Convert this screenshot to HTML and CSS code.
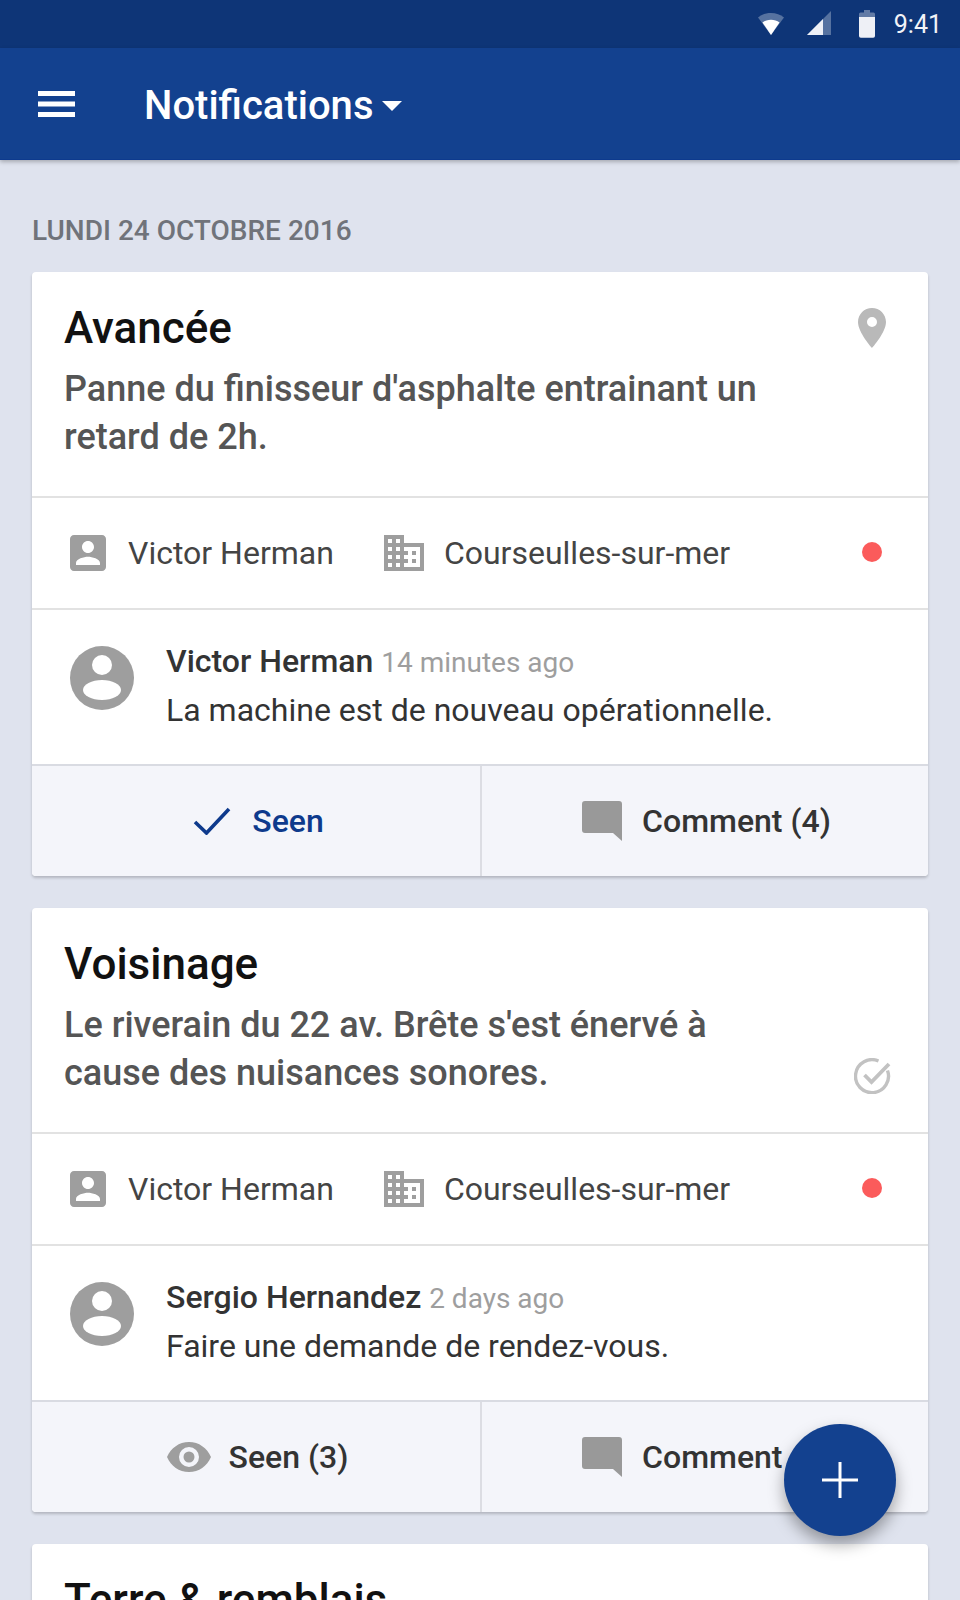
FILE: index.html
```html
<!DOCTYPE html>
<html lang="en">
<head>
<meta charset="UTF-8">
<meta name="viewport" content="width=device-width, initial-scale=1.0">
<title>Notifications</title>
<link rel="stylesheet" href="styles.css">
</head>
<body>
<div class="statusbar">
  <svg class="st-wifi" width="26" height="26" viewBox="0 0 26 26"><path d="M0 6.500C3.500 3.500 8 2 13 2s9.500 1.500 13 4.500L13 24z" fill="#fff" opacity=".3"/><path d="M4.500 11.500C6.800 9.700 9.800 8.700 13 8.700s6.200 1 8.500 2.800L13 24z" fill="#fff"/></svg>
  <svg class="st-signal" width="24" height="26" viewBox="0 0 24 26"><path d="M0 24 24 0v24z" fill="#fff" opacity=".3"/><path d="M0 24 16 8v16z" fill="#eef0f6"/></svg>
  <svg class="st-battery" width="16" height="28" viewBox="0 0 16 28"><path d="M5 0h6v2.500h3.500q1.500 0 1.500 1.500v6H0V4q0-1.500 1.500-1.500H5z" fill="#fff" opacity=".35"/><path d="M0 7h16v19q0 1.800-1.800 1.800H1.800Q0 27.800 0 26z" fill="#eef0f6"/></svg>
  <span class="st-time">9:41</span>
</div>
<header class="appbar">
  <svg class="menu" width="37" height="26" viewBox="0 0 37 26"><path d="M0 0h37v5H0zM0 10.500h37v5H0zM0 21h37v5H0z" fill="#fff"/></svg>
  <h1>Notifications</h1>
  <span class="caret"></span>
</header>

<main class="content">
  <div class="date">LUNDI 24 OCTOBRE 2016</div>

  <section class="card">
    <div class="head">
      <div class="head-text">
        <h2>Avancée</h2>
        <p>Panne du finisseur d'asphalte entrainant un retard de 2h.</p>
      </div>
      <svg class="pin" width="28" height="40" viewBox="0 0 28 40"><path fill-rule="evenodd" d="M14 0C6.300 0 0 6.200 0 14c0 10.500 14 26 14 26s14-15.500 14-26C28 6.200 21.700 0 14 0zm0 19a5 5 0 1 1 0-10 5 5 0 0 1 0 10z" fill="#b9b9b9"/></svg>
    </div>
    <div class="meta">
      <svg class="ic-contact" width="36" height="36" viewBox="3 3 18 18"><use href="#contact"/></svg>
      <span class="meta-name">Victor Herman</span>
      <svg class="ic-building" width="40" height="36" viewBox="2 3 20 18"><use href="#building"/></svg>
      <span class="meta-place">Courseulles-sur-mer</span>
      <span class="dot"></span>
    </div>
    <div class="comment">
      <svg class="avatar" width="64" height="64" viewBox="0 0 64 64"><use href="#avatar"/></svg>
      <div class="comment-text">
        <div><strong>Victor Herman</strong> <span class="ago">14 minutes ago</span></div>
        <div class="msg">La machine est de nouveau opérationnelle.</div>
      </div>
    </div>
    <div class="actions">
      <div class="action seen">
        <svg width="38" height="28" viewBox="0 0 38 28"><path d="M2 15l11.500 11L36 2" fill="none" stroke="#0e3a8c" stroke-width="3.600"/></svg>
        <span>Seen</span>
      </div>
      <div class="action">
        <svg width="40" height="40" viewBox="0 0 40 40"><use href="#bubble"/></svg>
        <span>Comment (4)</span>
      </div>
    </div>
  </section>

  <section class="card">
    <div class="head">
      <div class="head-text">
        <h2>Voisinage</h2>
        <p>Le riverain du 22 av. Brête s'est énervé à cause des nuisances sonores.</p>
      </div>
      <svg class="done" width="38" height="36" viewBox="0 0 38 36"><path d="M33.500 12.500A16.500 16.500 0 1 1 24.500 3" fill="none" stroke="#c2c2c2" stroke-width="3.400"/><path d="M10.500 17l7 7L35 6" fill="none" stroke="#c2c2c2" stroke-width="3.800"/></svg>
    </div>
    <div class="meta">
      <svg class="ic-contact" width="36" height="36" viewBox="3 3 18 18"><use href="#contact"/></svg>
      <span class="meta-name">Victor Herman</span>
      <svg class="ic-building" width="40" height="36" viewBox="2 3 20 18"><use href="#building"/></svg>
      <span class="meta-place">Courseulles-sur-mer</span>
      <span class="dot"></span>
    </div>
    <div class="comment">
      <svg class="avatar" width="64" height="64" viewBox="0 0 64 64"><use href="#avatar"/></svg>
      <div class="comment-text">
        <div><strong>Sergio Hernandez</strong> <span class="ago">2 days ago</span></div>
        <div class="msg">Faire une demande de rendez-vous.</div>
      </div>
    </div>
    <div class="actions">
      <div class="action seen-count">
        <svg width="44" height="30" viewBox="0 0 44 30"><path fill-rule="evenodd" d="M22 0C12 0 4 6 0 15c4 9 12 15 22 15s18-6 22-15C40 6 32 0 22 0zm0 25a10 10 0 1 1 0-20 10 10 0 0 1 0 20zm0-4.500a5.500 5.500 0 1 0 0-11 5.500 5.500 0 0 0 0 11z" fill="#9e9e9e"/></svg>
        <span>Seen (3)</span>
      </div>
      <div class="action">
        <svg width="40" height="40" viewBox="0 0 40 40"><use href="#bubble"/></svg>
        <span>Comment (2)</span>
      </div>
    </div>
  </section>

  <section class="card">
    <div class="head">
      <div class="head-text">
        <h2>Terre &amp; remblais</h2>
      </div>
    </div>
  </section>
</main>

<button class="fab"><svg width="36" height="36" viewBox="0 0 36 36"><path d="M16.500 0h3v16.500H36v3H19.500V36h-3V19.500H0v-3h16.500z" fill="#fff"/></svg></button>

<svg class="defs" width="0" height="0">
  <defs>
    <path id="contact" fill="#9e9e9e" d="M3 5v14c0 1.100.89 2 2 2h14c1.100 0 2-.9 2-2V5c0-1.100-.9-2-2-2H5c-1.110 0-2 .9-2 2zm12 4c0 1.660-1.340 3-3 3s-3-1.340-3-3 1.340-3 3-3 3 1.340 3 3zm-9 8c0-2 4-3.100 6-3.100s6 1.100 6 3.100v1H6v-1z"/>
    <path id="building" fill="#9e9e9e" d="M12 7V3H2v18h20V7H12zM6 19H4v-2h2v2zm0-4H4v-2h2v2zm0-4H4V9h2v2zm0-4H4V5h2v2zm4 12H8v-2h2v2zm0-4H8v-2h2v2zm0-4H8V9h2v2zm0-4H8V5h2v2zm10 12h-8v-2h2v-2h-2v-2h2v-2h-2V9h8v10zm-2-8h-2v2h2v-2zm0 4h-2v2h2v-2z"/>
    <g id="avatar">
      <circle cx="32" cy="32" r="32" fill="#9e9e9e"/>
      <circle cx="32" cy="19" r="10" fill="#fff"/>
      <ellipse cx="32" cy="44" rx="19" ry="10" fill="#fff"/>
    </g>
    <path id="bubble" d="M3 0h34q3 0 3 3v37l-9-8H3q-3 0-3-3V3q0-3 3-3z" fill="#999"/>
  </defs>
</svg>
</body>
</html>
```

FILE: styles.css
```css
/* Notifications screen */
html, body {
  margin: 0;
  height: 1600px;
  overflow: hidden;
}
body {
  position: relative;
  font-family: Roboto, "Liberation Sans", sans-serif;
  background-color: #dfe3ee;
  color: #212121;
}
h1, h2, p {
  margin: 0;
}
.defs {
  position: absolute;
}

.statusbar {
  height: 48px;
  background-color: #0e3577;
  display: flex;
  align-items: center;
  justify-content: flex-end;
  padding-right: 18px;
}
.st-wifi {
  margin-right: 23px;
}
.st-signal {
  margin-right: 28px;
}
.st-battery {
  margin-right: 19px;
}
.st-time {
  color: #f1f3f8;
  font-size: 25px;
}

.appbar {
  position: relative;
  height: 112px;
  background-color: #13418f;
  border-bottom: 1px solid #0d3a8e;
  box-sizing: border-box;
  box-shadow: 0 2px 4px rgba(0, 0, 0, .25);
  display: flex;
  align-items: center;
}
.menu {
  margin-left: 38px;
}
.appbar h1 {
  margin: 3px 0 0 69px;
  color: #fff;
  font-size: 40px;
  font-weight: 500;
}
.caret {
  margin: 4px 0 0 9px;
  border-left: 10px solid transparent;
  border-right: 10px solid transparent;
  border-top: 10px solid #fff;
}

.content {
  padding: 0 32px;
}
.date {
  height: 112px;
  line-height: 142px;
  font-size: 28px;
  font-weight: 500;
  color: #70737a;
}

.card {
  background-color: #fff;
  border-radius: 4px;
  box-shadow: 0 2px 3px rgba(0, 0, 0, .2);
  margin-bottom: 32px;
  overflow: hidden;
}
.head {
  position: relative;
  height: 226px;
  padding: 28px 32px 0;
  box-sizing: border-box;
  border-bottom: 2px solid #e2e2e2;
}
.head h2 {
  font-size: 44px;
  font-weight: 500;
  line-height: 56px;
  margin-bottom: 9px;
  color: #111;
}
.head p {
  width: 720px;
  font-size: 36px;
  font-weight: 500;
  line-height: 48px;
  color: #555;
}
.pin {
  position: absolute;
  right: 42px;
  top: 36px;
}
.done {
  position: absolute;
  right: 36px;
  top: 150px;
}

.meta {
  height: 112px;
  box-sizing: border-box;
  border-bottom: 2px solid #e2e2e2;
  display: flex;
  align-items: center;
  font-size: 32px;
  color: #444;
}
.ic-contact {
  margin-left: 38px;
}
.meta-name {
  margin-left: 22px;
}
.ic-building {
  margin-left: 50px;
}
.meta-place {
  margin-left: 20px;
}
.dot {
  width: 20px;
  height: 20px;
  border-radius: 50%;
  background-color: #fb5b5b;
  margin: 0 46px 2px auto;
}

.comment {
  height: 156px;
  box-sizing: border-box;
  border-bottom: 2px solid #d9dbe2;
  display: flex;
  padding: 36px 0 0 38px;
}
.avatar {
  flex-shrink: 0;
}
.comment-text {
  margin: -9px 0 0 32px;
  font-size: 32px;
  line-height: 48px;
  color: #333;
}
.comment-text strong {
  font-weight: 500;
}
.ago {
  font-size: 28px;
  color: #9e9e9e;
}
.msg {
  margin-top: -1px;
}

.actions {
  display: flex;
  height: 110px;
  background-color: #f4f5fa;
}
.action {
  flex: 1;
  box-sizing: border-box;
  padding-left: 3px;
  display: flex;
  align-items: center;
  justify-content: center;
  gap: 20px;
  font-size: 32px;
  font-weight: 500;
  color: #333;
}
.action:first-child {
  flex: 0 0 448px;
}
.action + .action {
  border-left: 2px solid #dcdde3;
}
.action svg {
  flex-shrink: 0;
}
.seen {
  padding-left: 5px;
  color: #0e3a8c;
  gap: 21px;
}
.seen-count {
  gap: 18px;
}

.fab {
  position: absolute;
  left: 784px;
  top: 1424px;
  width: 112px;
  height: 112px;
  border: none;
  border-radius: 50%;
  padding: 0;
  background-color: #13418f;
  box-shadow: 0 8px 16px rgba(0, 0, 0, .35);
  display: flex;
  align-items: center;
  justify-content: center;
}
```
